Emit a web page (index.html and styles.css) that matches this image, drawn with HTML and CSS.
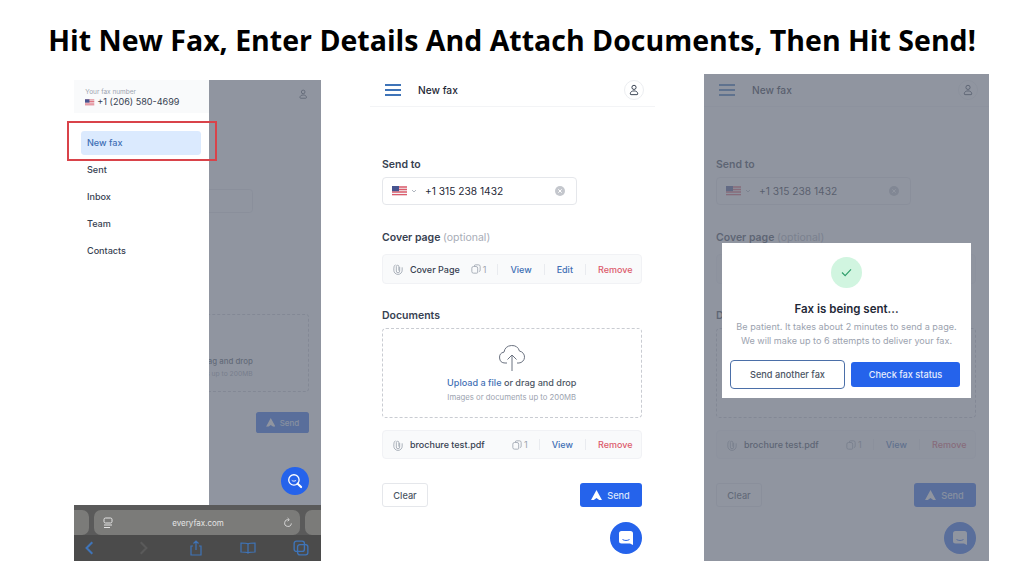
FILE: index.html
```html
<!DOCTYPE html>
<html lang="en">
<head>
    <meta charset="UTF-8">
    <meta name="viewport" content="width=device-width, initial-scale=1.0">
    <title>Hit New Fax</title>
    <link rel="stylesheet" href="styles.css">
</head>
<body>
    <!-- Shared icons -->
    <svg class="icon-defs" width="0" height="0">
        <symbol id="i-flag" viewBox="0 0 15 10">
            <rect width="15" height="10" rx="1" fill="#f3f4f6"/>
            <path d="M0 1h15M0 3.500h15M0 6h15M0 8.700h15" stroke="#dc5b6b" stroke-width="1.300"/>
            <rect width="7" height="5.200" fill="#47548f"/>
        </symbol>
        <symbol id="i-user" viewBox="0 0 16 16">
            <circle cx="8" cy="4.500" r="2.800" fill="none" stroke="currentColor" stroke-width="1.300"/>
            <path d="M3 13.200c0-2.500 2-4 5-4s5 1.500 5 4c0 .6-.4 1-1 1H4c-.6 0-1-.4-1-1z" fill="none" stroke="currentColor" stroke-width="1.300"/>
        </symbol>
        <symbol id="i-clip" viewBox="0 0 12 14">
            <path d="M8 4.500v5a2 2 0 0 1-4 0V4a1.500 1.500 0 0 1 3 0v5" fill="none" stroke="currentColor" stroke-width="1"/>
            <path d="M3 1.800A5 5 0 0 0 1 6v2.500a5 5 0 0 0 10 0V5" fill="none" stroke="currentColor" stroke-width="1"/>
        </symbol>
        <symbol id="i-pages" viewBox="0 0 12 12">
            <path d="M4 2.500A1.500 1.500 0 0 1 5.500 1H9a2 2 0 0 1 2 2v4.500A1.500 1.500 0 0 1 9.500 9" fill="none" stroke="currentColor" stroke-width="1"/>
            <path d="M1 5a2 2 0 0 1 2-2h3a2 2 0 0 1 2 2v5a1 1 0 0 1-1 1H3a2 2 0 0 1-2-2z" fill="none" stroke="currentColor" stroke-width="1"/>
        </symbol>
        <symbol id="i-send" viewBox="0 0 12 11">
            <path d="M6 0l6 11H9L6 8.800 3 11H0z" fill="currentColor"/>
        </symbol>
        <symbol id="i-chat" viewBox="0 0 16 16">
            <path d="M3.500 1h9A2.500 2.500 0 0 1 15 3.500V15l-3-1.500H3.500A2.500 2.500 0 0 1 1 11V3.500A2.500 2.500 0 0 1 3.500 1z" fill="currentColor"/>
            <path d="M4.500 9.500c2 1.300 5 1.300 7 0" fill="none" stroke="#2563eb" stroke-width="1"/>
        </symbol>
        <symbol id="i-cloud" viewBox="0 0 28 28">
            <path d="M9 19H7a5.500 5.500 0 0 1-1-10.900 8 8 0 0 1 15.500-1A6 6 0 0 1 21 19h-2M14 27V11M9.500 15.500L14 11l4.500 4.500" fill="none" stroke="#6b7280" stroke-width="1"/>
        </symbol>
    </svg>

    <h1 class="headline">Hit New Fax, Enter Details And Attach Documents, Then Hit Send!</h1>

    <div class="shots">

        <!-- Menu open -->
        <div class="phone phone-menu">
            <div class="phone-screen">
                <div class="app-header">
                    <span class="header-spacer"></span>
                    <span class="avatar"><svg class="avatar-icon"><use href="#i-user"/></svg></span>
                </div>
                <div class="fax-form fax-form-short">
                    <label class="field-label"></label>
                    <div class="phone-input"></div>
                    <label class="field-label field-cover"></label>
                    <div class="file-row file-row-blank"></div>
                    <label class="field-label field-docs"></label>
                    <div class="dropzone">
                        <svg class="cloud"><use href="#i-cloud"/></svg>
                        <p class="drop-main"><span class="link">Upload a file</span> or drag and drop</p>
                        <p class="drop-sub">Images or documents up to 200MB</p>
                    </div>
                    <div class="form-actions form-actions-end">
                        <button class="btn btn-send"><svg class="send-icon"><use href="#i-send"/></svg>Send</button>
                    </div>
                </div>
                <div class="scrim"></div>
                <div class="drawer">
                    <div class="drawer-head">
                        <p class="drawer-caption">Your fax number</p>
                        <p class="drawer-number"><svg class="flag-small"><use href="#i-flag"/></svg>+1 (206) 580-4699</p>
                    </div>
                    <nav class="drawer-nav">
                        <a class="nav-item nav-active">New fax</a>
                        <a class="nav-item">Sent</a>
                        <a class="nav-item">Inbox</a>
                        <a class="nav-item">Team</a>
                        <a class="nav-item">Contacts</a>
                    </nav>
                </div>
                <div class="highlight-box"></div>
                <button class="fab fab-search">
                    <svg viewBox="0 0 18 18" width="18" height="18"><circle cx="8" cy="8" r="6" fill="none" stroke="#fff" stroke-width="1.500"/><path d="M5.500 8.500c1.200 1.200 3.800 1.200 5 0" fill="none" stroke="#fff"/><path d="M12.300 12.300l4 4" stroke="#fff" stroke-width="2.400" stroke-linecap="round"/></svg>
                </button>
            </div>
            <div class="safari">
                <div class="safari-tabs">
                    <span class="tab-stub"></span>
                    <div class="url-pill">
                        <svg class="url-icon" viewBox="0 0 10 12"><rect x="1" y="1" width="8" height="5" rx="1.500" fill="none" stroke="#e5e5e5"/><path d="M1 8h8M1 10.500h6" stroke="#e5e5e5"/></svg>
                        <span>everyfax.com</span>
                        <svg class="url-icon" viewBox="0 0 12 12"><path d="M10 6.500a4 4 0 1 1-3-4.300M5.500 0l2 2-2 2" fill="none" stroke="#e5e5e5"/></svg>
                    </div>
                    <span class="tab-stub"></span>
                </div>
                <div class="safari-tools">
                    <svg viewBox="0 0 14 14"><path d="M9 2L4 7l5 5" fill="none" stroke="#3f74b8" stroke-width="1.800"/></svg>
                    <svg viewBox="0 0 14 14"><path d="M5 2l5 5-5 5" fill="none" stroke="#5a5a5a" stroke-width="1.800"/></svg>
                    <svg viewBox="0 0 14 16"><path d="M4 6H2v9h10V6h-2M7 10V1M4.500 3.500L7 1l2.500 2.500" fill="none" stroke="#3f74b8" stroke-width="1.200"/></svg>
                    <svg viewBox="0 0 16 12"><path d="M8 2C6.500 1 4 1 1 1v9c3 0 5.500 0 7 1 1.500-1 4-1 7-1V1c-3 0-5.500 0-7 1zM8 2v9" fill="none" stroke="#3f74b8" stroke-width="1.200"/></svg>
                    <svg viewBox="0 0 14 14"><rect x="1" y="1" width="9" height="9" rx="2" fill="none" stroke="#3f74b8" stroke-width="1.200"/><rect x="4" y="4" width="9" height="9" rx="2" fill="none" stroke="#3f74b8" stroke-width="1.200"/></svg>
                </div>
            </div>
        </div>

        <!-- Form -->
        <div class="phone phone-form">
            <div class="app-header app-header-line">
                <button class="menu-btn"><span></span><span></span><span></span></button>
                <span class="header-title">New fax</span>
                <span class="avatar avatar-ring"><svg class="avatar-icon"><use href="#i-user"/></svg></span>
            </div>
            <div class="fax-form">
                <label class="field-label">Send to</label>
                <div class="phone-input">
                    <svg class="flag"><use href="#i-flag"/></svg>
                    <svg class="chevron" viewBox="0 0 6 4"><path d="M1 1l2 2 2-2" fill="none" stroke="#9ca3af" stroke-width=".8"/></svg>
                    <span class="phone-number">+1 315 238 1432</span>
                    <svg class="clear-icon" viewBox="0 0 10 10"><circle cx="5" cy="5" r="5" fill="#c4c7cd"/><path d="M3.300 3.300l3.400 3.400M6.700 3.300l-3.400 3.400" stroke="#fff"/></svg>
                </div>
                <label class="field-label field-cover">Cover page <span class="optional">(optional)</span></label>
                <div class="file-row">
                    <svg class="clip"><use href="#i-clip"/></svg>
                    <span class="file-name">Cover Page</span>
                    <svg class="pages"><use href="#i-pages"/></svg>
                    <span class="page-count">1</span>
                    <a class="link action">View</a>
                    <a class="link action">Edit</a>
                    <a class="danger action">Remove</a>
                </div>
                <label class="field-label field-docs">Documents</label>
                <div class="dropzone">
                    <svg class="cloud"><use href="#i-cloud"/></svg>
                    <p class="drop-main"><span class="link">Upload a file</span> or drag and drop</p>
                    <p class="drop-sub">Images or documents up to 200MB</p>
                </div>
                <div class="file-row file-row-doc">
                    <svg class="clip"><use href="#i-clip"/></svg>
                    <span class="file-name">brochure test.pdf</span>
                    <svg class="pages"><use href="#i-pages"/></svg>
                    <span class="page-count">1</span>
                    <a class="link action">View</a>
                    <a class="danger action">Remove</a>
                </div>
                <div class="form-actions">
                    <button class="btn btn-clear">Clear</button>
                    <button class="btn btn-send"><svg class="send-icon"><use href="#i-send"/></svg>Send</button>
                </div>
            </div>
            <button class="fab fab-chat"><svg class="chat-icon"><use href="#i-chat"/></svg></button>
        </div>

        <!-- Sent dialog -->
        <div class="phone phone-form">
            <div class="app-header app-header-line">
                <button class="menu-btn"><span></span><span></span><span></span></button>
                <span class="header-title">New fax</span>
                <span class="avatar avatar-ring"><svg class="avatar-icon"><use href="#i-user"/></svg></span>
            </div>
            <div class="fax-form">
                <label class="field-label">Send to</label>
                <div class="phone-input">
                    <svg class="flag"><use href="#i-flag"/></svg>
                    <svg class="chevron" viewBox="0 0 6 4"><path d="M1 1l2 2 2-2" fill="none" stroke="#9ca3af" stroke-width=".8"/></svg>
                    <span class="phone-number">+1 315 238 1432</span>
                    <svg class="clear-icon" viewBox="0 0 10 10"><circle cx="5" cy="5" r="5" fill="#c4c7cd"/><path d="M3.300 3.300l3.400 3.400M6.700 3.300l-3.400 3.400" stroke="#fff"/></svg>
                </div>
                <label class="field-label field-cover">Cover page <span class="optional">(optional)</span></label>
                <div class="file-row"></div>
                <label class="field-label field-docs">D</label>
                <div class="dropzone"></div>
                <div class="file-row file-row-doc">
                    <svg class="clip"><use href="#i-clip"/></svg>
                    <span class="file-name">brochure test.pdf</span>
                    <svg class="pages"><use href="#i-pages"/></svg>
                    <span class="page-count">1</span>
                    <a class="link action">View</a>
                    <a class="danger action">Remove</a>
                </div>
                <div class="form-actions">
                    <button class="btn btn-clear">Clear</button>
                    <button class="btn btn-send"><svg class="send-icon"><use href="#i-send"/></svg>Send</button>
                </div>
            </div>
            <button class="fab fab-chat"><svg class="chat-icon"><use href="#i-chat"/></svg></button>
            <div class="scrim scrim-center">
                <div class="modal">
                    <span class="modal-check">
                        <svg viewBox="0 0 12 10" width="11" height="9"><path d="M1 5l3.500 3.500L11 1.500" fill="none" stroke="#2f9e6b" stroke-width="1.300"/></svg>
                    </span>
                    <h2 class="modal-title">Fax is being sent...</h2>
                    <p class="modal-text">Be patient. It takes about 2 minutes to send a page.<br>We will make up to 6 attempts to deliver your fax.</p>
                    <div class="modal-actions">
                        <button class="btn btn-another">Send another fax</button>
                        <button class="btn btn-status">Check fax status</button>
                    </div>
                </div>
            </div>
        </div>
    </div>
</body>
</html>
```

FILE: styles.css
```css
body {
    margin: 0;
    width: 1024px;
    height: 576px;
    overflow: hidden;
    background: #fff;
    font-family: 'Inter', sans-serif;
    color: #374151;
    display: flex;
    flex-direction: column;
}

p, h1, h2 {
    margin: 0;
}

button {
    font-family: inherit;
    border: none;
    padding: 0;
    cursor: pointer;
}

.icon-defs {
    position: absolute;
}

.headline {
    height: 74px;
    line-height: 80px;
    text-align: center;
    font-family: 'Open Sans', sans-serif;
    font-size: 28.5px;
    font-weight: 700;
    color: #000;
    white-space: nowrap;
}

.shots {
    flex: 1;
    display: flex;
    align-items: flex-end;
    gap: 49px;
    padding: 0 0 15px 74px;
}

.phone {
    position: relative;
    display: flex;
    flex-direction: column;
    width: 285px;
    height: 487px;
    background: #fff;
}

.phone-menu {
    width: 247px;
    height: 481px;
}

.phone-screen {
    position: relative;
    flex: 1;
    zoom: 0.866;
}

/* App header */
.app-header {
    display: flex;
    align-items: center;
    height: 32px;
    padding: 0 11px 0 15px;
    flex-shrink: 0;
}

.app-header-line {
    border-bottom: 1px solid #f3f4f6;
}

.header-spacer {
    flex: 1;
}

.menu-btn {
    display: flex;
    flex-direction: column;
    gap: 3.5px;
    width: 16px;
    background: none;
}

.menu-btn span {
    height: 1.5px;
    background: #3f74b8;
}

.header-title {
    flex: 1;
    margin-left: 17px;
    font-size: 10.2px;
    font-weight: 500;
    color: #1f2937;
}

.avatar {
    display: flex;
    align-items: center;
    justify-content: center;
    width: 20px;
    height: 20px;
    border-radius: 50%;
    color: #374151;
}

.avatar-ring {
    border: 1px solid #eceef1;
    box-sizing: border-box;
}

.avatar-icon {
    width: 12px;
    height: 12px;
}

/* Form */
.fax-form {
    padding: 51px 13.5px 0 12px;
}

.fax-form-short {
    padding-top: 75px;
}

.field-label {
    display: block;
    height: 14px;
    line-height: 14px;
    margin-bottom: 5px;
    font-size: 10.5px;
    font-weight: 600;
    color: #374151;
}

.field-cover {
    margin-top: 26px;
    margin-bottom: 9px;
}

.field-docs {
    margin-top: 25px;
    margin-bottom: 5px;
}

.optional {
    font-weight: 400;
    color: #a8adb7;
}

.phone-input {
    display: flex;
    align-items: center;
    box-sizing: border-box;
    width: 195px;
    height: 28px;
    padding: 0 11px 0 9px;
    border: 1px solid #e5e7eb;
    border-radius: 4px;
}

.flag {
    width: 15px;
    height: 10px;
}

.chevron {
    width: 6px;
    height: 4px;
    margin-left: 4px;
}

.phone-number {
    flex: 1;
    margin-left: 8px;
    font-size: 10.2px;
    color: #1f2937;
}

.clear-icon {
    width: 10px;
    height: 10px;
}

.file-row {
    display: flex;
    align-items: center;
    box-sizing: border-box;
    height: 30px;
    padding: 0 8px 0 10px;
    border: 1px solid #f1f2f5;
    border-radius: 4px;
    background: #f9fafb;
    font-size: 9px;
}

.file-row-doc {
    height: 29px;
    margin-top: 12px;
}

/* the menu shot has no cover row behind the drawer, only the gap */
.file-row-blank {
    height: 23px;
    background: #fff;
    border-color: #fff;
}

.clip {
    width: 10px;
    height: 12px;
    color: #9ca3af;
}

.file-name {
    flex: 1;
    margin-left: 7px;
    font-weight: 500;
    color: #374151;
}

.pages {
    width: 10px;
    height: 10px;
    color: #9ca3af;
}

.page-count {
    margin-left: 2px;
    margin-right: 11px;
    color: #9ca3af;
}

.action {
    padding-left: 12px;
    font-weight: 500;
    border-left: 1px solid #e9ebef;
    margin-left: 12px;
}

.page-count + .action {
    margin-left: 0;
}

.link {
    color: #3f6fb5;
}

.danger {
    color: #dc5b6b;
}

.dropzone {
    display: flex;
    flex-direction: column;
    align-items: center;
    box-sizing: border-box;
    height: 90px;
    padding-top: 15px;
    border: 1px dashed #c9ccd2;
    border-radius: 4px;
}

.cloud {
    width: 28px;
    height: 28px;
}

.drop-main {
    margin-top: 4px;
    font-size: 9.1px;
    font-weight: 500;
    line-height: 14px;
    color: #4b5563;
}

.drop-sub {
    font-size: 7.75px;
    line-height: 14px;
    color: #9ca3af;
}

.form-actions {
    display: flex;
    justify-content: space-between;
    margin-top: 24px;
}

.form-actions-end {
    justify-content: flex-end;
}

.btn {
    height: 24px;
    border-radius: 3px;
    font-size: 9.2px;
    font-weight: 500;
}

.btn-clear {
    width: 46px;
    background: #fff;
    border: 1px solid #e5e7eb;
    color: #4b5563;
}

.btn-send {
    display: flex;
    align-items: center;
    justify-content: center;
    gap: 5px;
    width: 62px;
    background: #2563eb;
    color: #dbe6fb;
}

.send-icon {
    width: 11px;
    height: 10px;
    color: #fff;
}

.fab {
    position: absolute;
    display: flex;
    align-items: center;
    justify-content: center;
    border-radius: 50%;
    background: #2563eb;
}

.fab-chat {
    right: 13px;
    bottom: 7px;
    width: 32px;
    height: 32px;
}

.chat-icon {
    width: 16px;
    height: 16px;
    color: #fff;
}

/* Overlays */
.scrim {
    position: absolute;
    top: 0;
    right: 0;
    bottom: 0;
    left: 0;
    background: rgba(107, 114, 128, 0.75);
}

.scrim-center {
    display: flex;
    justify-content: center;
    align-items: center;
    padding-top: 5px;
    box-sizing: border-box;
}

.modal {
    display: flex;
    flex-direction: column;
    align-items: center;
    box-sizing: border-box;
    width: 249px;
    height: 155px;
    padding-top: 14px;
    background: #fff;
}

.modal-check {
    display: flex;
    align-items: center;
    justify-content: center;
    width: 31px;
    height: 31px;
    border-radius: 50%;
    background: #d1f5e0;
}

.modal-title {
    margin-top: 13px;
    font-size: 11.5px;
    font-weight: 600;
    line-height: 16px;
    color: #1f2937;
}

.modal-text {
    margin-top: 3px;
    font-size: 9.1px;
    line-height: 14px;
    text-align: center;
    color: #9ca3af;
}

.modal-actions {
    display: flex;
    align-items: center;
    gap: 6px;
    margin-top: 12px;
    padding-right: 3px;
}

.btn-another {
    width: 115px;
    height: 29px;
    background: #fff;
    border: 1.5px solid #4b6fa8;
    border-radius: 4px;
    color: #4b5563;
}

.btn-status {
    width: 109px;
    height: 25px;
    background: #2563eb;
    color: #e5edfd;
}

/* Menu drawer (inside the zoomed screen, so sizes are divided by .866) */
.drawer {
    position: absolute;
    top: 0;
    left: 0;
    bottom: 0;
    width: 156px;
    background: #fff;
}

.drawer-head {
    box-sizing: border-box;
    height: 38px;
    padding: 10px 0 0 13px;
    background: #f9fafb;
}

.drawer-caption {
    font-size: 7.5px;
    line-height: 9px;
    color: #9ca3af;
}

.drawer-number {
    display: flex;
    align-items: center;
    gap: 3px;
    font-size: 10.5px;
    line-height: 13px;
    color: #374151;
}

.flag-small {
    width: 11px;
    height: 8px;
}

.drawer-nav {
    display: flex;
    flex-direction: column;
    gap: 3.2px;
    width: 139px;
    margin: 21px 0 0 8px;
}

.nav-item {
    height: 28px;
    line-height: 28px;
    padding-left: 7px;
    border-radius: 4px;
    font-size: 10.5px;
    font-weight: 500;
    color: #374151;
}

.nav-active {
    background: #dbeafe;
    color: #3f6fb5;
}

.highlight-box {
    position: absolute;
    top: 47px;
    left: -8px;
    box-sizing: border-box;
    width: 173px;
    height: 46px;
    border: 2.5px solid #d9434a;
}

.fab-search {
    right: 14px;
    bottom: 12px;
    width: 32px;
    height: 32px;
}

/* Safari bar */
.safari {
    height: 56px;
    flex-shrink: 0;
    background: #4b4b4b;
}

.safari-tabs {
    display: flex;
    gap: 5px;
    height: 30px;
    padding-top: 5px;
    box-sizing: border-box;
    background: #5a5a5a;
}

.tab-stub {
    flex: 0 0 15px;
    background: #7b7b79;
}

.tab-stub:first-child {
    border-radius: 0 7px 7px 0;
}

.tab-stub:last-child {
    flex-basis: 16px;
    border-radius: 7px 0 0 7px;
}

.url-pill {
    flex: 1;
    display: flex;
    align-items: center;
    justify-content: space-between;
    padding: 0 7px 0 9px;
    border-radius: 7px;
    background: #7b7b79;
    font-size: 8px;
    color: #e5e5e5;
}

.url-icon {
    width: 10px;
    height: 12px;
}

.safari-tools {
    display: flex;
    align-items: center;
    justify-content: space-between;
    height: 26px;
    padding: 0 12px 0 8px;
}

.safari-tools svg {
    width: 16px;
    height: 16px;
}
```
